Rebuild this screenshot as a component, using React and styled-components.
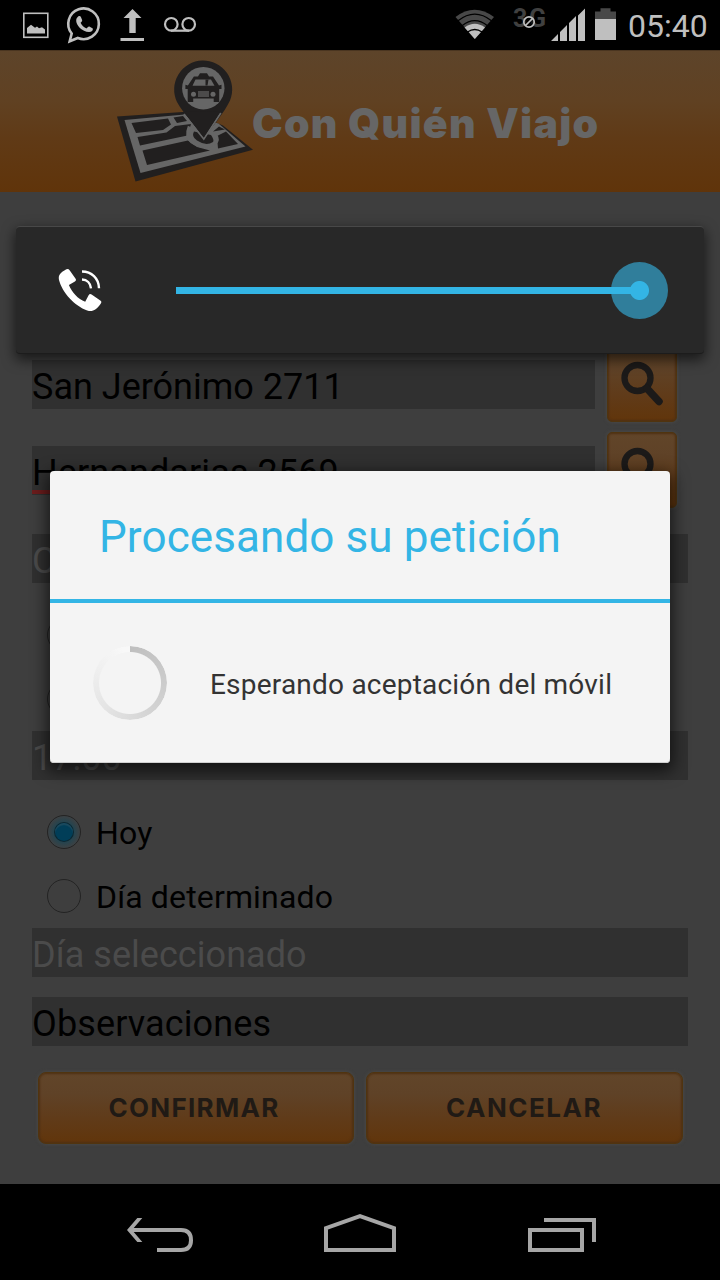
import React from 'react';
import styled, { createGlobalStyle, css } from 'styled-components';

const Global = createGlobalStyle`
  * { box-sizing: border-box; }
  body { margin: 0; background: #000; font-family: Roboto, "Liberation Sans", sans-serif; }
  svg { display: block; flex: none; }
`;

const Phone = styled.div`
  position: relative;
  width: 720px;
  height: 1280px;
  display: flex;
  flex-direction: column;
  overflow: hidden;
  background: #3e3e3e;
`;

const StatusBar = styled.header`
  height: 50px;
  flex: none;
  background: #000;
  display: flex;
  align-items: center;
  justify-content: space-between;
`;

const Clock = styled.time`
  width: 92px;
  margin-left: 11px;
  font-size: 32px;
  line-height: 50px;
  color: #bfbfbf;
  padding-top: 1px;
  white-space: nowrap;
`;

const StatusGroup = styled.div`
  display: flex;
  align-items: center;
  height: 50px;
`;

const Brand = styled.div`
  height: 142px;
  flex: none;
  display: flex;
  padding-left: 110px;
  background: linear-gradient(#5d442a 0%, #604122 35%, #603a16 62%, #60340a 100%);
  border-top: 1px solid #4a3520;
`;

const BrandName = styled.h1`
  margin: 47px 0 0 -8px;
  font: 900 41px/50px Inter, sans-serif;
  letter-spacing: ${(p) => p.$spacing}px;
  color: #666;
  white-space: nowrap;
`;

const Form = styled.main`
  flex: 1;
  padding: 154px 32px 0;
  display: flex;
  flex-direction: column;
`;

const SearchRow = styled.div`
  display: flex;
  align-items: center;
  gap: 12px;
  height: 76px;
  margin-bottom: 10px;
`;

const Field = styled.div`
  height: 49px;
  flex: none;
  width: ${(p) => (p.$short ? '563px' : '100%')};
  margin-top: ${(p) => p.$top || 0}px;
  background: #303030;
  color: ${(p) => (p.$hint ? '#4b4b4b' : '#000')};
  font-size: 36px;
  line-height: 55px;
  letter-spacing: ${(p) => p.$spacing || 0}px;
  white-space: nowrap;
  ${(p) => p.$error && css`
    box-shadow: inset 0 -1px #303030, inset 0 -5px #6b1c1c;
  `}
`;

const orange = css`
  background: linear-gradient(#614529 0%, #5f4227 30%, #603b19 65%, #61350b 100%);
  border: 1px solid #50340f;
  box-shadow: 0 0 3px 1px #474644, inset 0 0 2px 1px #4f3013;
`;

const SearchButton = styled.button`
  ${orange}
  width: 70px;
  height: 76px;
  padding: 0;
  border-radius: 5px;
  display: flex;
  align-items: center;
  justify-content: center;
`;

const Actions = styled.div`
  display: flex;
  gap: 12px;
  margin: 26px 5px 0 6px;
`;

const ActionButton = styled.button`
  ${orange}
  width: ${(p) => p.$width}px;
  height: 72px;
  padding: 0 ${(p) => p.$right || 0}px 0 0;
  border-radius: 8px;
  font: 700 26px/70px Inter, sans-serif;
  letter-spacing: ${(p) => p.$spacing || 0}px;
  color: #201a15;
`;

const RadioGroup = styled.div`
  margin-top: ${(p) => p.$top}px;
`;

const RadioRow = styled.label`
  height: 64px;
  display: flex;
  align-items: center;
  gap: 15px;
  padding-left: 15px;
  font-size: 32px;
  line-height: 40px;
  color: #000;
`;

const RadioLabel = styled.span`
  padding-top: 2px;
  letter-spacing: 0.15px;
`;

const Dot = styled.span`
  width: 34px;
  height: 34px;
  flex: none;
  border-radius: 50%;
  border: 1px solid #232323;
  display: grid;
  place-items: center;
  ${(p) => p.$on && css`
    background: radial-gradient(circle, #25444f 45%, #3a4144 68%);
    &::after {
      content: '';
      width: 18px;
      height: 18px;
      border-radius: 50%;
      background: #013e58;
      box-shadow: 0 0 0 1px #0c2731, inset 0 2px 1px #1c4a5e;
    }
  `}
`;

const NavBar = styled.nav`
  height: 96px;
  flex: none;
  background: #000;
`;

const VolumePanel = styled.section`
  position: absolute;
  left: 16px;
  top: 226px;
  width: 688px;
  height: 128px;
  display: flex;
  align-items: center;
  padding-left: 42px;
  background: #282828;
  border-radius: 4px;
  border-top: 1px solid #484848;
  border-bottom: 1px solid #1c1c1c;
  box-shadow: 0 5px 13px 1px rgba(0, 0, 0, 0.6);
`;

const Slider = styled.div`
  margin-left: 74px;
  width: 492px;
  height: 58px;
  display: flex;
  align-items: center;
  justify-content: flex-end;
  background: linear-gradient(#33b5e5, #33b5e5) 0 50% / 464px 7px no-repeat;
`;

const Thumb = styled.span`
  width: 57px;
  height: 57px;
  border-radius: 50%;
  background:
    radial-gradient(circle, #33b5e5 9px, transparent 10px),
    linear-gradient(#33b5e5, #33b5e5) 0 50% / 28px 7px no-repeat,
    #307e9b;
`;

const Dialog = styled.section`
  position: absolute;
  left: 50px;
  top: 471px;
  width: 620px;
  height: 292px;
  display: flex;
  flex-direction: column;
  background: #f4f4f4;
  border-radius: 4px;
  box-shadow: 0 5px 16px 3px rgba(0, 0, 0, 0.62), inset 0 -1px #d0d0d0;
`;

const DialogTitle = styled.h2`
  margin: 0;
  height: 132px;
  padding-left: 49px;
  border-bottom: 4px solid #33b5e5;
  font-size: 44px;
  font-weight: 400;
  line-height: 132px;
  letter-spacing: ${(p) => p.$spacing}px;
  color: #33b5e5;
  white-space: nowrap;
`;

const DialogBody = styled.div`
  flex: 1;
  display: flex;
  align-items: center;
  padding-left: 43px;
  gap: 43px;
`;

const Spinner = styled.span`
  width: 74px;
  height: 74px;
  border-radius: 50%;
  background: conic-gradient(#bfbfbf, #d2d2d2 38%, #e4e4e4 62%, #f8f8f8 97%);
  mask: radial-gradient(circle, transparent 30.5px, #000 31.5px);
`;

const Message = styled.p`
  margin: 4px 0 0;
  font-size: 28px;
  line-height: 36px;
  letter-spacing: ${(p) => p.$spacing}px;
  color: #333;
  white-space: nowrap;
`;

const NotificationIcons = () => (
  <svg width="220" height="50" viewBox="0 0 220 50" fill="none" stroke="#bfbfbf">
    <rect x="23.800" y="13.300" width="24" height="24" strokeWidth="1.600" />
    <path d="M27 33.500V28l4-3.200 4 3 2-1.200 2 1.600 3-1 3 2.300v4z" fill="#bfbfbf" stroke="none" />
    <path d="M69.700 41.300l2-7.800A15.300 15.300 0 1 1 77.800 38z" strokeWidth="2.600" strokeLinejoin="miter" />
    <path d="M78.200 16.500c1-.8 2.200-.6 2.700.5l1.300 3.200c.2 1-1.600 2.600-1.600 2.600 1 2.600 3.400 4.700 6 5.600 0 0 1.800-2.100 2.700-1.800l3.500 1.800c.5 1.800-1 3.500-3.800 3.600-6.700 0-13.300-6.700-12.800-12 .1-1.500 1-2.800 2-3.500z" fill="#bfbfbf" stroke="none" />
    <path d="M132.500 9l9 9h-5.800v15h-6.400V18h-5.800zM120.500 38h23.500v3h-23.500z" fill="#bfbfbf" stroke="none" />
    <circle cx="171.300" cy="24.300" r="6.300" strokeWidth="2.200" />
    <circle cx="188.700" cy="24.300" r="6.300" strokeWidth="2.200" />
    <path d="M171 30.700h18" strokeWidth="2.200" />
  </svg>
);

const SignalIcons = () => (
  <svg width="165" height="50" viewBox="452 0 165 50">
    <path d="M455.500 17Q474.500 2.500 494 17L474.800 39z" fill="#484848" />
    <path d="M464.600 27.500Q474.800 20 485 27.500L474.800 39z" fill="#bfbfbf" />
    <path d="M458 20.800Q474.800 7.500 491.500 20.800M462 25.700Q474.800 15.500 487.500 25.700M467.500 32Q474.800 27 482 32" fill="none" stroke="#000" strokeWidth="1.300" />
    <text x="513" y="26.700" fill="#404040" fontFamily="Roboto, sans-serif" fontWeight="700" fontSize="25" textLength="33">3G</text>
    <circle cx="529" cy="22" r="5.200" fill="#000" fillOpacity=".6" stroke="#bfbfbf" strokeWidth="1.700" />
    <path d="M525.500 25.500l7-7" stroke="#bfbfbf" strokeWidth="1.700" />
    <path d="M551 41l7-7v7zM560 41V32l7-7v16zM569 41V23l7-7v25zM578 41V15.500l7-7V41z" fill="#bfbfbf" />
    <path d="M595 11.500h5.500V8.300h10v3.200h5.500V19h-21z" fill="#484848" />
    <path d="M595 19h21v21h-21z" fill="#bfbfbf" />
  </svg>
);

const MapLogo = () => (
  <svg width="150" height="140" viewBox="110 51.500 150 140">
    <path d="M117 117l73-5 33 14 30 24.300L135.500 182z" fill="#211f1f" />
    <path d="M124.500 120.500l60-5.500 34 9 27 23-105 26.500z" fill="#666" />
    <path d="M131.500 123.500L168 119l3 6-8 5.500-27 3zM173.500 118l9.500-1.500 4 5-10 2zM137.500 137.500l29-4.500 8.500-6.500 16-2-3.500 11.500-47.500 10zM142.500 151L188 141l9 6.500 13 3.500-63 14.500zM213 132l6-5 6 3zM217 136.500l9-4.500 12 12.500-20 4.500z" fill="#211f1f" />
    <path d="M189.500 127q-4 10 2 15 14 9.500 25 0 2-4-3-8" fill="none" stroke="#666" strokeWidth="3.500" />
    <path d="M194 132q-3 5 3 9 9 6 16 1.500 1.500-2-2-7z" fill="#211f1f" />
    <path d="M203.700 139.500C196 127 184 115 177 102.500A29 29 0 1 1 230 101C224 114 212 127 203.700 139.500z" fill="#211f1f" />
    <path d="M184 114.500l19.800 25 17-26" fill="none" stroke="#666" strokeWidth="1.800" />
    <path d="M184 112.500l19.800 25.500 17-26.500z" fill="#211f1f" />
    <circle cx="203.300" cy="88.700" r="21.200" fill="#666" />
    <path d="M198 77l2-3.200h7l2 3.200h4l6 9 2.500-.8v4.200h-2.300v13.200h-5.500v-3.500h-20.500v3.500h-5.500V89.400h-2.300v-4.200l2.500.8 6-9z" fill="#211f1f" />
    <path d="M195.500 80h15.500l3.500 6.200h-22z" fill="#666" />
    <path d="M205.500 80v6h2l1-6z" fill="#211f1f" />
    <circle cx="193.500" cy="94.700" r="2.500" fill="#666" />
    <circle cx="213" cy="94.700" r="2.500" fill="#666" />
    <path d="M198 91.500h11v6h-11z" fill="#4c4b4b" />
  </svg>
);

const SearchIcon = () => (
  <svg width="44" height="46" viewBox="0 0 44 46" fill="none" stroke="#1c1a19">
    <circle cx="17.500" cy="17" r="13" strokeWidth="6.300" />
    <path d="M27 27.500L39 40.500" strokeWidth="7.500" strokeLinecap="round" />
  </svg>
);

const PhoneIcon = () => (
  <svg width="44" height="44" viewBox="58 268 44 44">
    <path d="M65.500 269.700q2.600-1.600 4.300.8l5.800 8.200q1 1.700-.7 2.800l-6 3.400c3 7.500 9 13.800 16.300 16.800l3.400-6.500q1.200-1.800 3-.6l8.700 5.800q1.900 1.400.4 3.300c-4.500 6-8.200 8.600-13.500 6.700-12.500-4.500-25-18-28.200-30.500-1-4.500 1.500-7.500 6.500-10.200z" fill="#fff" />
    <path d="M82 271.500c9.500 0 16.800 7 17 16.800M82 279.500c5 .2 8.500 3.700 9 8.800" fill="none" stroke="#fff" strokeWidth="2.400" />
  </svg>
);

const NavIcons = () => (
  <svg width="720" height="96" viewBox="0 1184 720 96" fill="none" stroke="#a6a6a6" strokeWidth="4">
    <path d="M130 1230h51q10 0 10 10.200 0 9.800-10 9.800h-24" />
    <path d="M137.300 1218h5L132 1230l10.300 12h-5L127 1230z" fill="#a6a6a6" stroke="none" />
    <path d="M326 1250v-21.800l34-12 34 12v21.800z" />
    <path d="M530 1230h52v20h-52zM544 1220h50v22" />
  </svg>
);

export default function App() {
  return (
    <>
      <Global />
      <Phone>
        <StatusBar>
          <NotificationIcons />
          <StatusGroup>
            <SignalIcons />
            <Clock>05:40</Clock>
          </StatusGroup>
        </StatusBar>
        <Brand>
          <MapLogo />
          <BrandName $spacing={1.25}>Con Quién Viajo</BrandName>
        </Brand>
        <Form>
          <SearchRow>
            <Field $short>San Jerónimo 2711</Field>
            <SearchButton aria-label="Buscar"><SearchIcon /></SearchButton>
          </SearchRow>
          <SearchRow>
            <Field $short $error $spacing={0.1}>Hernandarias 2569</Field>
            <SearchButton aria-label="Buscar"><SearchIcon /></SearchButton>
          </SearchRow>
          <Field $top={16} $hint>C</Field>
          <RadioGroup $top={20}>
            <RadioRow><Dot /></RadioRow>
            <RadioRow><Dot /></RadioRow>
          </RadioGroup>
          <Field $hint>17:00</Field>
          <RadioGroup $top={20}>
            <RadioRow><Dot $on /><RadioLabel>Hoy</RadioLabel></RadioRow>
            <RadioRow><Dot /><RadioLabel>Día determinado</RadioLabel></RadioRow>
          </RadioGroup>
          <Field $hint $spacing={0.05}>Día seleccionado</Field>
          <Field $top={20} $spacing={0.12}>Observaciones</Field>
          <Actions>
            <ActionButton $width={316} $spacing={1.3} $right={4}>CONFIRMAR</ActionButton>
            <ActionButton $width={317} $spacing={1.5} $right={1}>CANCELAR</ActionButton>
          </Actions>
        </Form>
        <NavBar><NavIcons /></NavBar>
        <VolumePanel>
          <PhoneIcon />
          <Slider><Thumb /></Slider>
        </VolumePanel>
        <Dialog>
          <DialogTitle $spacing={0.1}>Procesando su petición</DialogTitle>
          <DialogBody>
            <Spinner />
            <Message $spacing={0.21}>Esperando aceptación del móvil</Message>
          </DialogBody>
        </Dialog>
      </Phone>
    </>
  );
}
